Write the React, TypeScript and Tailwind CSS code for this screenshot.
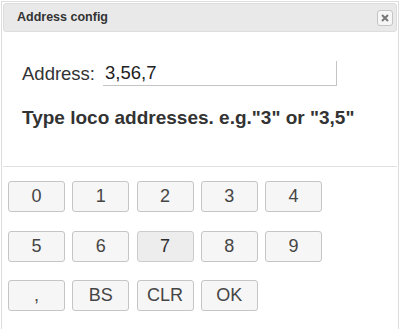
import { useState } from 'react';

const keys = [
    ['0', '1', '2', '3', '4'],
    ['5', '6', '7', '8', '9'],
    [',', 'BS', 'CLR', 'OK'],
];

function App() {
    const [address, setAddress] = useState('3,56,7');

    const press = (k: string) => {
        if (k === 'BS') setAddress((a) => a.slice(0, -1));
        else if (k === 'CLR') setAddress('');
        else if (k !== 'OK') setAddress((a) => a + k);
    };

    return (
        <div className="w-[400px] h-[329px] overflow-hidden bg-white font-['Liberation_Sans',Arial,sans-serif]">
            <div className="ml-px mt-px w-[398px] h-[340px] border border-[#dddddd] p-px bg-white">
                <div className="flex h-[29px] items-center justify-between rounded-[3px] border border-[#dddddd] bg-[#e9e9e9] pl-[13px] pr-[3px]">
                    <span className="text-[12.5px] font-bold text-[#333333]">Address config</span>
                    <button
                        type="button"
                        className="flex h-4 w-4 items-center justify-center rounded-[3px] border border-[#c5c5c5] bg-[#f6f6f6]"
                    >
                        <svg width="8" height="8" viewBox="0 0 8 8">
                            <path d="M1 1L7 7M7 1L1 7" stroke="#777777" strokeWidth="2" />
                        </svg>
                    </button>
                </div>

                <div className="pl-[19px] pt-[29px] pb-[37px] text-[19px] leading-[22px] text-[#333333]">
                    <div className="flex h-[25px] items-center">
                        <span className="text-[18.5px]">Address:</span>
                        <input
                            value={address}
                            onChange={(e) => setAddress(e.target.value)}
                            className="ml-[8px] h-[25px] w-[234px] border-r border-b border-[#c4c4c4] pl-[2px] text-[18.5px] text-[#222222] outline-none"
                        />
                    </div>
                    <p className="mt-[21px] font-bold">Type loco addresses. e.g."3" or "3,5"</p>
                </div>

                <div className="h-px bg-[#e2e2e2]" />

                <div className="flex flex-col gap-y-[18.5px] pl-[5px] pt-[14px]">
                    {keys.map((row, i) => (
                        <div key={i} className="flex gap-x-[7.25px]">
                            {row.map((k) => (
                                <button
                                    key={k}
                                    type="button"
                                    onClick={() => press(k)}
                                    className={
                                        k === '7'
                                            ? 'h-[31px] w-[57px] rounded-[3px] border border-[#cccccc] bg-[#ededed] text-[18px] text-[#2b2b2b]'
                                            : 'h-[31px] w-[57px] rounded-[3px] border border-[#c5c5c5] bg-[#f6f6f6] text-[18px] text-[#454545]'
                                    }
                                >
                                    {k}
                                </button>
                            ))}
                        </div>
                    ))}
                </div>
            </div>
        </div>
    );
}

export default App;
